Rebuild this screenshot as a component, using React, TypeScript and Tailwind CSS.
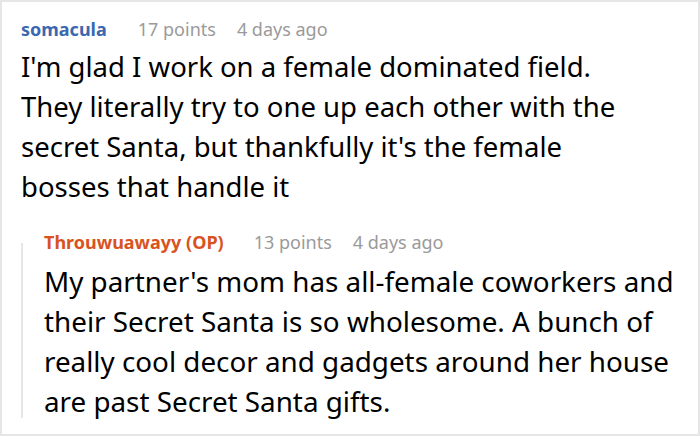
export default function App() {
  return (
    <div
      className="w-[700px] h-[436px] bg-white border-2 border-[#e6e6e6] overflow-hidden text-black"
      style={{ fontFamily: '"Noto Sans", "Open Sans", sans-serif' }}
    >
      <div className="pl-[19px] pt-[14px]">
        <div className="flex items-baseline text-[18px] leading-[26px] whitespace-nowrap">
          <span className="font-bold text-[#3b68b0]">somacula</span>
          <span className="ml-[31px] text-[#9a9a9a]">17 points</span>
          <span className="ml-[21px] text-[#9a9a9a]">4 days ago</span>
        </div>
        <p className="text-[27.5px] leading-[40px] mt-[5px] whitespace-nowrap">
          I'm glad I work on a female dominated field.
          <br />
          They literally try to one up each other with the
          <br />
          secret Santa, but thankfully it's the female
          <br />
          bosses that handle it
        </p>
        <div className="flex mt-[22px]">
          <div className="w-[2px] bg-[#e6e6e6] mt-[14px] mb-[3px]" />
          <div className="pl-[21px]">
            <div className="flex items-baseline text-[18px] leading-[26px] whitespace-nowrap">
              <span className="font-bold text-[#d9531e]">Throuwuawayy (OP)</span>
              <span className="ml-[30px] text-[#9a9a9a]">13 points</span>
              <span className="ml-[21px] text-[#9a9a9a]">4 days ago</span>
            </div>
            <p className="text-[27.8px] leading-[40px] mt-[6px] whitespace-nowrap">
              My partner's mom has all-female coworkers and
              <br />
              their Secret Santa is so wholesome. A bunch of
              <br />
              really cool decor and gadgets around her house
              <br />
              are past Secret Santa gifts.
            </p>
          </div>
        </div>
      </div>
    </div>
  );
}
